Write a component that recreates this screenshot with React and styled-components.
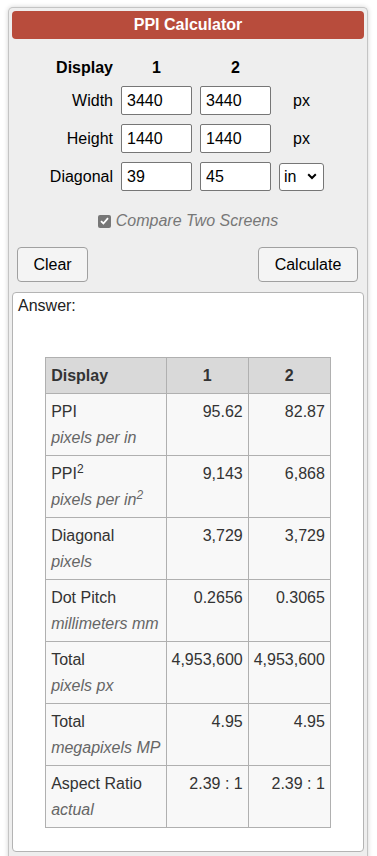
import React from 'react';
import styled, {createGlobalStyle} from 'styled-components';

const GlobalStyle = createGlobalStyle`
  body {
    margin: 0;
    background: #fff;
    font-family: "Liberation Sans", Arial, sans-serif;
    font-size: 16px;
    color: #000;
  }
`;

const Panel = styled.div`
  box-sizing: border-box;
  width: 360px;
  min-height: 860px;
  margin: 7px 0 0 8px;
  padding: 3px;
  background: #eee;
  border: 1px solid #c4c4c4;
  border-bottom: none;
  border-radius: 5px 5px 0 0;
  box-shadow: 0 0 5px rgba(0, 0, 0, 0.18);
`;

const Header = styled.div`
  height: 28px;
  line-height: 28px;
  background: #b84c3c;
  border-radius: 4px;
  color: #fff;
  font-weight: bold;
  font-size: 16px;
  text-align: center;
`;

const FormGrid = styled.div`
  display: grid;
  grid-template-columns: 101px 71px 71px 45px;
  column-gap: 8px;
  row-gap: 9px;
  align-items: center;
  margin-top: 19px;
`;

const Label = styled.div`
  text-align: ${p => (p.$center ? 'center' : 'right')};
  font-weight: ${p => (p.$bold ? 'bold' : 'normal')};
  line-height: 20px;
  margin-bottom: ${p => (p.$head ? '-1px' : '0')};
`;

const Field = styled.input`
  box-sizing: border-box;
  width: 71px;
  height: 29px;
  padding: 0 0 0 5px;
  border: 1px solid #767676;
  border-radius: 2px;
  background: #fff;
  font-family: inherit;
  font-size: 16px;
  color: #000;
`;

const Unit = styled.div`
  text-align: center;
`;

const Select = styled.label`
  box-sizing: border-box;
  display: flex;
  align-items: center;
  justify-content: space-between;
  width: 45px;
  height: 28px;
  padding: 0 6px 0 4px;
  border: 1px solid #767676;
  border-radius: 3px;
  background: #fff;
`;

const CheckRow = styled.div`
  display: flex;
  justify-content: center;
  align-items: center;
  gap: 5px;
  margin-top: 21px;
  color: #777;
  font-style: italic;
`;

const Box = styled.span`
  display: inline-flex;
  align-items: center;
  justify-content: center;
  width: 13px;
  height: 13px;
  border-radius: 2px;
  background: #777;
`;

const Buttons = styled.div`
  display: flex;
  justify-content: space-between;
  padding: 0 6px 0 5px;
  margin-top: 17px;
`;

const Button = styled.button`
  box-sizing: border-box;
  width: ${p => p.$w}px;
  height: 35px;
  border: 1px solid #a0a0a0;
  border-radius: 4px;
  background: #f4f4f4;
  font-family: inherit;
  font-size: 16px;
  color: #000;
`;

const Answer = styled.div`
  margin-top: 10px;
  background: #fff;
  border: 1px solid #b4b4b4;
  border-radius: 4px;
  padding: 4px 5px 23px;
  color: #222;
`;

const AnswerTitle = styled.div`
  line-height: 18px;
`;

const Table = styled.table`
  border-collapse: collapse;
  margin: 42px auto 0;
  color: #333;
  background: #f8f8f8;
`;

const Th = styled.th`
  border: 1px solid #b0b0b0;
  background: #d9d9d9;
  padding: 5px 5px 4px;
  line-height: 26px;
  text-align: ${p => (p.$left ? 'left' : 'center')};
  width: ${p => p.$w}px;
  box-sizing: border-box;
`;

const Td = styled.td`
  border: 1px solid #b0b0b0;
  padding: 5px 5px 4px;
  line-height: 26px;
  vertical-align: top;
  text-align: ${p => (p.$right ? 'right' : 'left')};
  white-space: nowrap;
`;

const Sub = styled.div`
  font-style: italic;
  color: #666;
`;

const Sup = styled.sup`
  font-size: 12px;
  line-height: 0;
`;

const rows = [
  ['PPI', 'pixels per in', '95.62', '82.87'],
  [<>PPI<Sup>2</Sup></>, <>pixels per in<Sup>2</Sup></>, '9,143', '6,868'],
  ['Diagonal', 'pixels', '3,729', '3,729'],
  ['Dot Pitch', 'millimeters mm', '0.2656', '0.3065'],
  ['Total', 'pixels px', '4,953,600', '4,953,600'],
  ['Total', 'megapixels MP', '4.95', '4.95'],
  ['Aspect Ratio', 'actual', '2.39 : 1', '2.39 : 1'],
];

export default function App() {
  return (
    <>
      <GlobalStyle />
      <Panel>
        <Header>PPI Calculator</Header>
        <FormGrid>
          <Label $bold $head>Display</Label>
          <Label $bold $center $head>1</Label>
          <Label $bold $center $head>2</Label>
          <div />

          <Label>Width</Label>
          <Field defaultValue="3440" />
          <Field defaultValue="3440" />
          <Unit>px</Unit>

          <Label>Height</Label>
          <Field defaultValue="1440" />
          <Field defaultValue="1440" />
          <Unit>px</Unit>

          <Label>Diagonal</Label>
          <Field defaultValue="39" />
          <Field defaultValue="45" />
          <Select>
            in
            <svg width="10" height="7" viewBox="0 0 10 7">
              <path d="M1.2 1.3 5 5 8.8 1.3" fill="none" stroke="#000" strokeWidth="2" />
            </svg>
          </Select>
        </FormGrid>

        <CheckRow>
          <Box>
            <svg width="9" height="8" viewBox="0 0 9 8">
              <path d="M1 4.2 3.4 6.5 8 1.2" fill="none" stroke="#fff" strokeWidth="1.8" />
            </svg>
          </Box>
          Compare Two Screens
        </CheckRow>

        <Buttons>
          <Button $w={71}>Clear</Button>
          <Button $w={100}>Calculate</Button>
        </Buttons>

        <Answer>
          <AnswerTitle>Answer:</AnswerTitle>
          <Table>
            <thead>
              <tr>
                <Th $left $w={120}>Display</Th>
                <Th $w={82}>1</Th>
                <Th $w={82}>2</Th>
              </tr>
            </thead>
            <tbody>
              {rows.map((r, i) => (
                <tr key={i}>
                  <Td>
                    {r[0]}
                    <Sub>{r[1]}</Sub>
                  </Td>
                  <Td $right>{r[2]}</Td>
                  <Td $right>{r[3]}</Td>
                </tr>
              ))}
            </tbody>
          </Table>
        </Answer>
      </Panel>
    </>
  );
}
